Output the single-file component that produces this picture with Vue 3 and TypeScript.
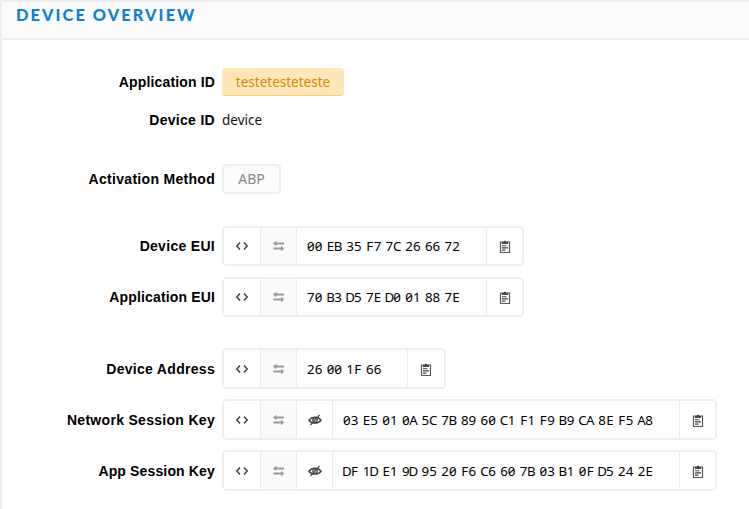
<script setup lang="ts">
interface KeyRow {
  label: string
  value: string
  size: 'eui' | 'address' | 'session'
}

const groups: KeyRow[][] = [
  [
    { label: 'Device EUI', value: '00 EB 35 F7 7C 26 66 72', size: 'eui' },
    { label: 'Application EUI', value: '70 B3 D5 7E D0 01 88 7E', size: 'eui' },
  ],
  [
    { label: 'Device Address', value: '26 00 1F 66', size: 'address' },
    { label: 'Network Session Key', value: '03 E5 01 0A 5C 7B 89 60 C1 F1 F9 B9 CA 8E F5 A8', size: 'session' },
    { label: 'App Session Key', value: 'DF 1D E1 9D 95 20 F6 C6 60 7B 03 B1 0F D5 24 2E', size: 'session' },
  ],
]
</script>

<template>
  <section class="panel">
    <header class="head"><h1>DEVICE OVERVIEW</h1></header>
    <div class="body">
      <div class="row app">
        <span class="label tight">Application ID</span>
        <span class="tag">testetesteteste</span>
      </div>
      <div class="row device">
        <span class="label">Device ID</span>
        <span class="plain">device</span>
      </div>
      <div class="row method">
        <span class="label">Activation Method</span>
        <span class="badge">ABP</span>
      </div>
      <div v-for="(group, g) in groups" :key="g" class="group">
        <div v-for="row in group" :key="row.label" class="row" :class="'row-' + row.size">
          <span class="label" :class="{ tight: row.label.startsWith('App') }">{{ row.label }}</span>
          <div class="field" :class="row.size">
            <button class="cell first" aria-label="format">
              <svg width="14" height="10" viewBox="0 0 14 10"><path d="M5 1.5 1.8 5 5 8.5M9 1.5 12.2 5 9 8.5" fill="none" stroke="#444" stroke-width="1.5" /></svg>
            </button>
            <button class="cell swap" aria-label="swap">
              <svg width="12" height="12" viewBox="0 0 12 12"><path d="M0 3.5 3.3.8V2.6H11V4.4H3.3V6.2ZM11.3 8.5 8 5.8V7.6H.5V9.4H8V11.2Z" fill="#999" /></svg>
            </button>
            <button v-if="row.size === 'session'" class="cell" aria-label="toggle">
              <svg width="14" height="12" viewBox="0 0 14 12"><path d="M1 6.2C3.8 2.1 10.2 2.1 13 6.2 10.2 10 3.8 10 1 6.2Z" fill="none" stroke="#444" stroke-width="1.5" /><circle cx="7" cy="6.1" r="2.2" fill="none" stroke="#444" stroke-width="1.3" /><path d="M2.5 11 11.6.9" stroke="#444" stroke-width="1.2" /></svg>
            </button>
            <div class="value"><span v-for="(pair, i) in row.value.split(' ')" :key="i" class="pair"><span v-for="(ch, c) in pair" :key="c" class="digit">{{ ch }}</span></span></div>
            <button class="cell copy" aria-label="copy">
              <svg width="12" height="14" viewBox="0 0 12 14"><path d="M3 2H1.5V12.5H10.5V2H9" fill="none" stroke="#555" stroke-width="1.2" /><path d="M3 1.4H4.6L6 .4 7.4 1.4H9V4H3Z" fill="#444" /><path d="M3 5.7H7.5M3 7.9H9M3 10.1H6.5" stroke="#444" stroke-width="1.1" /></svg>
            </button>
          </div>
        </div>
      </div>
    </div>
  </section>
</template>

<style>
body { background: #fff; overflow: hidden; }
</style>
<style scoped>
.panel { box-sizing: border-box; height: 509px; overflow: hidden; border-left: 2px solid #eee; border-top: 2px solid #eee; font-family: "Noto Sans", sans-serif; color: #111; }
.head { height: 36px; background: #fbfbfb; border-bottom: 2px solid #eee; }
h1 { width: max-content; margin: 0 0 0 14px; padding-top: 1px; font: 900 17.8px/22px Lato, sans-serif; letter-spacing: 2.25px; color: #1080d0; white-space: nowrap; transform: scaleX(.92); transform-origin: left; }
.body { padding-top: 28px; }
.row { display: flex; align-items: center; height: 41px; }
.row-eui { height: 40px; }
.label { width: 213px; margin-right: 7px; text-align: right; white-space: nowrap; font: bold 14px/20px "Liberation Sans", sans-serif; letter-spacing: .3px; color: #000; }
.tight { letter-spacing: .15px; }
.app { height: 28px; }
.tag { box-sizing: border-box; width: 122px; height: 28px; border-radius: 4px; border-bottom: 1px solid #ffcb78; background: #ffe7ba; color: #d38b00; text-align: center; font-size: 13.5px; line-height: 28px; }
.device { height: 48px; }
.plain { font-size: 13.5px; line-height: 20px; }
.method { height: 30px; margin-top: 20px; }
.badge { box-sizing: border-box; width: 59px; height: 30px; border: 2px solid #eee; border-radius: 4px; background: #fbfbfb; color: #888; text-align: center; font-size: 14px; line-height: 26px; }
.group { display: flex; flex-direction: column; gap: 10px; }
.method + .group { margin-top: 32px; gap: 11px; }
.group + .group { margin-top: 31px; }
.field { box-sizing: border-box; display: flex; height: 100%; border: 2px solid #eee; border-radius: 5px; overflow: hidden; background: #fff; }
.eui { width: 302px; }
.address { width: 224px; }
.session { width: 495px; }
.cell { box-sizing: border-box; display: flex; flex: none; align-items: center; justify-content: center; width: 36px; padding: 0; border: 0; border-right: 1px solid #eaeaea; background: #fff; }
.first { width: 37px; }
.swap { background: #fafafa; }
.copy { width: 35px; padding-top: 2px; border: 0; }
.address .copy { width: 36px; }
.value { box-sizing: border-box; display: flex; flex: 1; align-items: center; gap: 4.25px; padding-left: 10px; border-right: 1px solid #eaeaea; background: #fdfdfd; font: 13.3px/20px "Noto Sans", monospace; font-feature-settings: "zero"; color: #000; }
.pair { display: flex; width: 15.4px; }
.digit { display: flex; justify-content: center; width: 7.7px; }
</style>
